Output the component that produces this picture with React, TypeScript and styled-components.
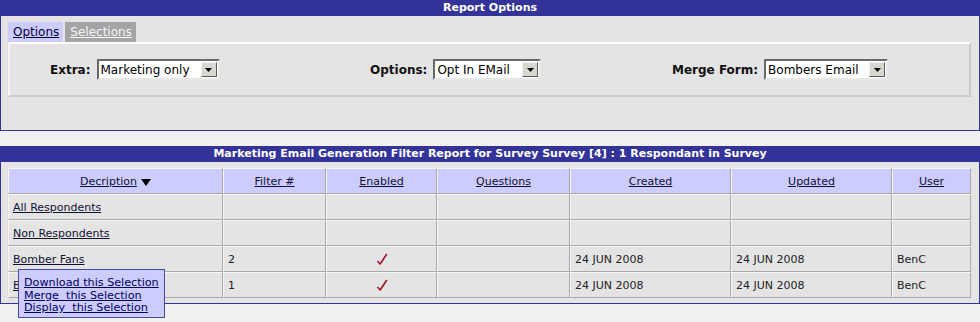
import React from 'react';
import styled, { createGlobalStyle } from 'styled-components';

const GlobalStyle = createGlobalStyle`
  html,
  body,
  #root {
    min-height: 322px;
  }
  body {
    margin: 0;
    background: #f1f1f3;
    font-family: "DejaVu Sans", Verdana, sans-serif;
    font-size: 11px;
    color: #222;
  }
`;

interface IRow {
  description: string;
  filter: string;
  enabled: boolean;
  created: string;
  updated: string;
  user: string;
}

const rows: IRow[] = [
  { description: 'All Respondents', filter: '', enabled: false, created: '', updated: '', user: '' },
  { description: 'Non Respondents', filter: '', enabled: false, created: '', updated: '', user: '' },
  { description: 'Bomber Fans', filter: '2', enabled: true, created: '24 JUN 2008', updated: '24 JUN 2008', user: 'BenC' },
  { description: 'Bombers Members', filter: '1', enabled: true, created: '24 JUN 2008', updated: '24 JUN 2008', user: 'BenC' },
];

const columns = [
  { title: 'Decription', width: 215, sorted: true },
  { title: 'Filter #', width: 103 },
  { title: 'Enabled', width: 111 },
  { title: 'Questions', width: 133 },
  { title: 'Created', width: 161 },
  { title: 'Updated', width: 161 },
  { title: 'User', width: 79 },
];

function FakeSelect({ value, width }: { value: string; width: number }) {
  return (
    <S.Select $width={width}>
      <span className="select__value">{value}</span>
      <span className="select__button">
        <svg width="7" height="4" viewBox="0 0 7 4">
          <path d="M0 0 H7 L3.5 4 Z" fill="#000" />
        </svg>
      </span>
    </S.Select>
  );
}

function Check() {
  return (
    <svg width="12" height="13" viewBox="0 0 12 13">
      <path d="M1.5 8 L4.2 11 L10.8 1" fill="none" stroke="#a3122a" strokeWidth="1.6" strokeLinejoin="round" />
    </svg>
  );
}

export default function App() {
  return (
    <S.Page>
      <GlobalStyle />
      <S.Panel>
        <S.TitleBar>Report Options</S.TitleBar>
        <S.OptionsBody>
          <S.Tabs>
            <S.Tab $active>Options</S.Tab>
            <S.Tab>Selections</S.Tab>
          </S.Tabs>
          <S.OptionsBox>
            <S.Field>
              <label>Extra:</label>
              <FakeSelect value="Marketing only" width={123} />
            </S.Field>
            <S.Field>
              <label>Options:</label>
              <FakeSelect value="Opt In EMail" width={108} />
            </S.Field>
            <S.Field>
              <label>Merge Form:</label>
              <FakeSelect value="Bombers Email" width={124} />
            </S.Field>
          </S.OptionsBox>
        </S.OptionsBody>
      </S.Panel>

      <S.Panel $gap>
        <S.TitleBar>Marketing Email Generation Filter Report for Survey Survey [4] : 1 Respondant in Survey</S.TitleBar>
        <S.TableBody>
          <S.Table>
            <colgroup>
              {columns.map((c) => (
                <col key={c.title} style={{ width: c.width }} />
              ))}
            </colgroup>
            <thead>
              <tr>
                {columns.map((c) => (
                  <th key={c.title}>
                    <a>{c.title}</a>
                    {c.sorted && (
                      <svg className="sort" width="10" height="7" viewBox="0 0 10 7">
                        <path d="M0 0 H10 L5 7 Z" fill="#000" />
                      </svg>
                    )}
                  </th>
                ))}
              </tr>
            </thead>
            <tbody>
              {rows.map((r) => (
                <tr key={r.description}>
                  <td>
                    <a>{r.description}</a>
                  </td>
                  <td>{r.filter}</td>
                  <S.CenterCell>{r.enabled && <Check />}</S.CenterCell>
                  <td></td>
                  <td>{r.created}</td>
                  <td>{r.updated}</td>
                  <td>{r.user}</td>
                </tr>
              ))}
            </tbody>
          </S.Table>
          <S.PopupMenu>
            <a>Download this Selection</a>
            <a>Merge&nbsp; this Selection</a>
            <a>Display&nbsp; this Selection</a>
          </S.PopupMenu>
        </S.TableBody>
      </S.Panel>
    </S.Page>
  );
}

const S = {
  Page: styled.div`
    min-height: 322px;
  `,
  Panel: styled.div<{ $gap?: boolean }>`
    margin-top: ${({ $gap }) => ($gap ? '15px' : '0')};
    background: #e4e4e4;
    border: 1px solid #333399;
    border-top: 0;
  `,
  TitleBar: styled.div`
    height: 16px;
    line-height: 16px;
    margin: 0 -1px;
    background: #333399;
    color: #fff;
    font-weight: bold;
    font-size: 11px;
    text-align: center;
  `,
  OptionsBody: styled.div`
    padding: 6px 8px 33px 7px;
  `,
  Tabs: styled.div`
    display: flex;
    gap: 2px;
    height: 20px;
  `,
  Tab: styled.a<{ $active?: boolean }>`
    display: flex;
    align-items: center;
    padding: 0 4px 0 5px;
    font-size: 12px;
    text-decoration: underline;
    background: ${({ $active }) => ($active ? '#ccccff' : '#a4a4a4')};
    color: ${({ $active }) => ($active ? '#000033' : '#f4f4f4')};
  `,
  OptionsBox: styled.div`
    display: grid;
    grid-template-columns: 320px 302px 1fr;
    align-items: center;
    height: 51px;
    padding-left: 40px;
    border: 2px solid;
    border-color: #fff #cacaca #cacaca #f4f4f4;
  `,
  Field: styled.div`
    display: flex;
    align-items: center;
    gap: 6px;
    label {
      font-size: 12px;
      font-weight: bold;
      color: #111;
    }
  `,
  Select: styled.div<{ $width: number }>`
    display: flex;
    align-items: center;
    justify-content: space-between;
    box-sizing: border-box;
    width: ${({ $width }) => $width}px;
    height: 21px;
    background: #fff;
    border: 2px solid;
    border-color: #6a6a6a #e8e8e8 #e8e8e8 #6a6a6a;
    .select__value {
      padding-left: 2px;
      font-size: 12px;
      color: #000;
    }
    .select__button {
      display: flex;
      align-items: center;
      justify-content: center;
      box-sizing: border-box;
      width: 16px;
      height: 15px;
      margin-right: 1px;
      background: #d8d6d0;
      border: 1px solid;
      border-color: #f4f4f4 #5a5a5a #5a5a5a #f4f4f4;
    }
  `,
  TableBody: styled.div`
    position: relative;
    padding: 6px 8px 5px 7px;
  `,
  Table: styled.table`
    width: 963px;
    table-layout: fixed;
    border-collapse: separate;
    border-spacing: 0;
    font-size: 11px;
    th,
    td {
      height: 24px;
      padding: 0 4px;
      border: 1px solid;
      border-color: #f6f6f6 #a9a9a9 #a9a9a9 #f6f6f6;
      white-space: nowrap;
      overflow: hidden;
      text-align: left;
      color: #222;
    }
    th {
      background: #ccccff;
      font-weight: normal;
      text-align: center;
    }
    a {
      color: #111133;
      text-decoration: underline;
    }
    .sort {
      margin-left: 4px;
      vertical-align: -1px;
    }
  `,
  CenterCell: styled.td`
    && {
      text-align: center;
    }
    svg {
      vertical-align: middle;
    }
  `,
  PopupMenu: styled.div`
    position: absolute;
    left: 17px;
    top: 107px;
    z-index: 2;
    display: flex;
    flex-direction: column;
    width: 135px;
    padding: 7px 5px 2px 5px;
    background: #ccccff;
    border: 1px solid #4a4a99;
    font-size: 11.2px;
    line-height: 12.5px;
    a {
      color: #000066;
      text-decoration: underline;
      white-space: nowrap;
    }
  `,
};
